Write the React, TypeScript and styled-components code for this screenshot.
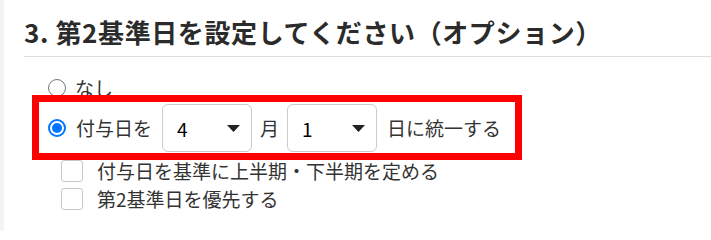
import React, { useState } from 'react';
import styled, { createGlobalStyle } from 'styled-components';

const GlobalStyle = createGlobalStyle`
  html, body {
    margin: 0;
    padding: 0;
    background: #ffffff;
  }
  body {
    font-family: "Noto Sans CJK JP", "Noto Sans", sans-serif;
    color: #333333;
  }
`;

const Page = styled.div`
  border-left: 4px solid #f4f4f4;
  padding-left: 20px;
  min-height: 231px;
  box-sizing: border-box;
`;

const Heading = styled.h2`
  margin: 0;
  padding: 14px 0 6px;
  font-size: 26px;
  line-height: 36px;
  font-weight: 700;
  letter-spacing: 0.6px;
  color: #2b2b2b;
  border-bottom: 1px solid #dddddd;
`;

const Options = styled.div`
  display: flex;
  flex-direction: column;
  margin-top: 17px;
  padding-left: 24px;
`;

const RadioRow = styled.label<{ $tall?: boolean }>`
  position: relative;
  display: flex;
  align-items: center;
  gap: ${(p) => (p.$tall ? '10px' : '9px')};
  height: ${(p) => (p.$tall ? '48px' : '28px')};
  margin-top: ${(p) => (p.$tall ? '2px' : '0')};
  font-size: 19px;
  line-height: 28px;
  cursor: pointer;
`;

const RadioDot = styled.span<{ $checked: boolean }>`
  flex: none;
  width: 18px;
  height: 18px;
  box-sizing: border-box;
  border-radius: 50%;
  border: ${(p) => (p.$checked ? '2px solid #0075ff' : '1.5px solid #767676')};
  display: flex;
  align-items: center;
  justify-content: center;
  &::after {
    content: '';
    width: 10px;
    height: 10px;
    border-radius: 50%;
    background: ${(p) => (p.$checked ? '#0075ff' : 'transparent')};
  }
`;

const Highlight = styled.div`
  position: absolute;
  left: -16px;
  top: -9px;
  width: 490px;
  height: 65px;
  box-sizing: border-box;
  border: 7px solid #ff0000;
  pointer-events: none;
  z-index: 2;
`;

const SelectWrap = styled.div`
  position: relative;
  width: 90px;
  height: 48px;
`;

const Select = styled.select`
  appearance: none;
  width: 100%;
  height: 100%;
  box-sizing: border-box;
  border: 1px solid #cccccc;
  border-radius: 6px;
  background: #ffffff;
  padding: 0 0 0 14px;
  font-family: "Noto Sans CJK JP", "Noto Sans", sans-serif;
  font-size: 19px;
  color: #000000;
  outline: none;
`;

const Caret = styled.svg`
  position: absolute;
  right: 12px;
  top: 21px;
  pointer-events: none;
`;

const Unit = styled.span`
  margin: 0 -2px;
`;

const CheckRow = styled.label<{ $first?: boolean }>`
  display: flex;
  align-items: center;
  gap: 14px;
  height: 28px;
  margin-top: ${(p) => (p.$first ? '5px' : '0')};
  padding-left: 13px;
  font-size: 19px;
  line-height: 28px;
`;

const CheckBox = styled.span`
  flex: none;
  width: 22px;
  height: 22px;
  box-sizing: border-box;
  border: 1px solid #c8c8c8;
  border-radius: 3px;
  background: #ffffff;
`;

const months = Array.from({ length: 12 }, (_, i) => i + 1);
const days = Array.from({ length: 31 }, (_, i) => i + 1);

const DropDown = ({ value, items, onChange }: { value: number; items: number[]; onChange: (v: number) => void }) => (
  <SelectWrap>
    <Select value={value} onChange={(e) => onChange(Number(e.target.value))}>
      {items.map((n) => (
        <option key={n} value={n}>
          {n}
        </option>
      ))}
    </Select>
    <Caret width="13" height="7" viewBox="0 0 13 7">
      <path d="M0 0 H13 L6.5 7 Z" fill="#222222" />
    </Caret>
  </SelectWrap>
);

const App = () => {
  const [mode, setMode] = useState<'none' | 'unify'>('unify');
  const [month, setMonth] = useState(4);
  const [day, setDay] = useState(1);

  return (
    <Page>
      <GlobalStyle />
      <Heading>3. 第2基準日を設定してください（オプション）</Heading>
      <Options>
        <RadioRow onClick={() => setMode('none')}>
          <RadioDot $checked={mode === 'none'} />
          なし
        </RadioRow>
        <RadioRow $tall onClick={() => setMode('unify')}>
          <RadioDot $checked={mode === 'unify'} />
          <span>付与日を</span>
          <DropDown value={month} items={months} onChange={setMonth} />
          <Unit>月</Unit>
          <DropDown value={day} items={days} onChange={setDay} />
          <span>日に統一する</span>
          <Highlight />
        </RadioRow>
        <CheckRow $first>
          <CheckBox />
          付与日を基準に上半期・下半期を定める
        </CheckRow>
        <CheckRow>
          <CheckBox />
          第2基準日を優先する
        </CheckRow>
      </Options>
    </Page>
  );
};

export default App;
